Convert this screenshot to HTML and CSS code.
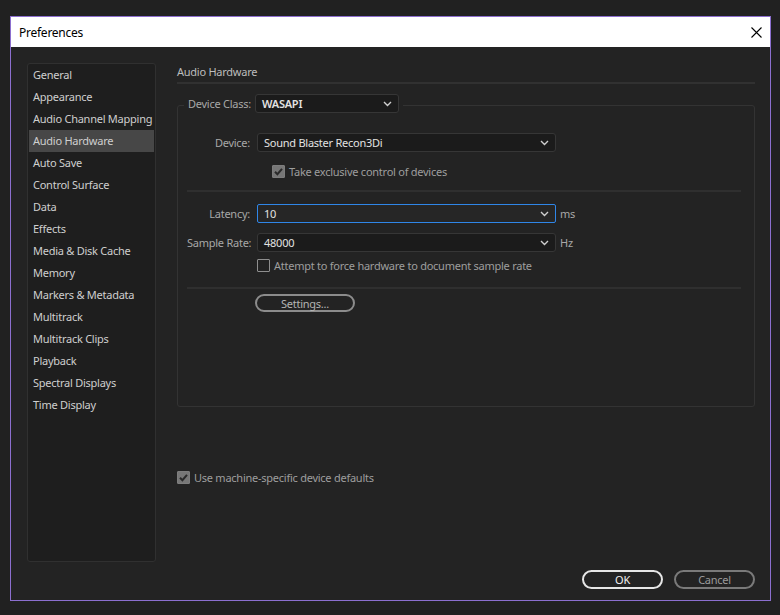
FILE: index.html
```html
<!DOCTYPE html>
<html>
<head>
<meta charset="utf-8">
<title>Preferences</title>
<link rel="stylesheet" href="styles.css">
</head>
<body>
<div class="dialog">
  <div class="titlebar">
    <span class="title">Preferences</span>
    <svg class="close" width="11" height="11" viewBox="0 0 11 11"><path d="M0.5 0.5 L10.5 10.5 M10.5 0.5 L0.5 10.5" stroke="#000" stroke-width="1.1" fill="none"/></svg>
  </div>
  <div class="body">
    <ul class="sidebar">
      <li>General</li>
      <li>Appearance</li>
      <li>Audio Channel Mapping</li>
      <li class="active">Audio Hardware</li>
      <li>Auto Save</li>
      <li>Control Surface</li>
      <li>Data</li>
      <li>Effects</li>
      <li>Media &amp; Disk Cache</li>
      <li>Memory</li>
      <li>Markers &amp; Metadata</li>
      <li>Multitrack</li>
      <li>Multitrack Clips</li>
      <li>Playback</li>
      <li>Spectral Displays</li>
      <li>Time Display</li>
    </ul>
    <div class="main">
      <div class="heading">Audio Hardware</div>
      <fieldset class="group">
        <legend class="legend">
          <span class="label">Device Class:</span>
          <div class="select select-class"><span class="value bold">WASAPI</span><svg class="chev" width="9" height="6" viewBox="0 0 9 6"><path d="M1 1 L4.5 4.5 L8 1" stroke="#cfcfcf" stroke-width="1.4" fill="none"/></svg></div>
        </legend>
        <div class="row row-device">
          <span class="label rlabel">Device:</span>
          <div class="select"><span class="value">Sound Blaster Recon3Di</span><svg class="chev" width="9" height="6" viewBox="0 0 9 6"><path d="M1 1 L4.5 4.5 L8 1" stroke="#cfcfcf" stroke-width="1.4" fill="none"/></svg></div>
        </div>
        <div class="check-row check-exclusive">
          <span class="box checked"><svg width="11" height="11" viewBox="0 0 11 11"><path d="M2 5.8 L4.4 8.2 L9 2.8" stroke="#2a2a2a" stroke-width="2" fill="none"/></svg></span>
          <span class="check-text">Take exclusive control of devices</span>
        </div>
        <div class="sep sep1"></div>
        <div class="row row-latency">
          <span class="label rlabel">Latency:</span>
          <div class="select focused"><span class="value">10</span><svg class="chev" width="9" height="6" viewBox="0 0 9 6"><path d="M1 1 L4.5 4.5 L8 1" stroke="#cfcfcf" stroke-width="1.4" fill="none"/></svg></div>
          <span class="unit">ms</span>
        </div>
        <div class="row row-rate">
          <span class="label rlabel">Sample Rate:</span>
          <div class="select"><span class="value">48000</span><svg class="chev" width="9" height="6" viewBox="0 0 9 6"><path d="M1 1 L4.5 4.5 L8 1" stroke="#cfcfcf" stroke-width="1.4" fill="none"/></svg></div>
          <span class="unit">Hz</span>
        </div>
        <div class="check-row check-force">
          <span class="box"></span>
          <span class="check-text">Attempt to force hardware to document sample rate</span>
        </div>
        <div class="sep sep2"></div>
        <div class="settings-row">
          <button class="pill settings">Settings...</button>
        </div>
      </fieldset>
      <div class="check-row check-defaults">
        <span class="box checked"><svg width="11" height="11" viewBox="0 0 11 11"><path d="M2 5.8 L4.4 8.2 L9 2.8" stroke="#2a2a2a" stroke-width="2" fill="none"/></svg></span>
        <span class="check-text">Use machine-specific device defaults</span>
      </div>
      <div class="buttons">
        <button class="pill ok">OK</button>
        <button class="pill cancel">Cancel</button>
      </div>
    </div>
  </div>
</div>
</body>
</html>
```

FILE: styles.css
```css
* { box-sizing: border-box; }
html, body { margin: 0; padding: 0; }
body {
  background: #212121;
  width: 780px;
  height: 615px;
  overflow: hidden;
  font-family: "Noto Sans", "Open Sans", "Liberation Sans", sans-serif;
  font-size: 11px;
  letter-spacing: -0.25px;
  padding: 16px 0 0 10px;
}
.dialog {
  width: 761px;
  height: 585px;
  border: 1px solid #8c6fcf;
  background: #232323;
  display: flex;
  flex-direction: column;
}
.titlebar {
  height: 30px;
  background: #ffffff;
  display: flex;
  align-items: center;
  justify-content: space-between;
  padding: 0 8px 0 8px;
  flex: none;
}
.title {
  color: #000;
  font-size: 12px;
}
.close { display: block; }
.body {
  flex: 1;
  display: flex;
  align-items: flex-start;
  gap: 21px;
  padding: 16px 15px 11px 16px;
}
.sidebar {
  list-style: none;
  margin: 0;
  padding: 0 1px;
  width: 129px;
  height: 499px;
  flex: none;
  background: #1e1e1e;
  border: 1px solid #303030;
  border-radius: 3px;
}
.sidebar li {
  height: 22px;
  line-height: 22px;
  padding-left: 4px;
  color: #cfcfcf;
  white-space: nowrap;
}
.sidebar li.active {
  background: #474747;
}
.main {
  flex: 1;
  align-self: stretch;
  display: flex;
  flex-direction: column;
}
.heading {
  height: 21px;
  line-height: 18px;
  color: #bdbdbd;
  border-bottom: 2px solid #313131;
}
.group {
  margin: 10px 0 0 0;
  border: 1px solid #333333;
  border-radius: 3px;
  padding: 0 13px 94px 9px;
  min-width: 0;
}
.legend {
  display: flex;
  align-items: flex-start;
  gap: 4px;
  margin-left: -3px;
  padding: 0 4px;
  height: 23px;
}
.legend .label { line-height: 19px; }
.label { color: #a8a8a8; white-space: nowrap; }
.rlabel {
  width: 63px;
  text-align: right;
  flex: none;
}
.select {
  position: relative;
  height: 19px;
  background: #1b1b1b;
  border: 1px solid #363636;
  border-radius: 3px;
  display: flex;
  align-items: center;
  justify-content: space-between;
  padding: 0 6px 0 6px;
  width: 299px;
  flex: none;
}
.select-class { width: 144px; height: 19px; }
.select.focused {
  background: #262626;
  border-color: #2f86e8;
  border-radius: 2px;
}
.value { color: #e2e2e2; white-space: nowrap; }
.bold { font-weight: 600; }
.chev { display: block; }
.row {
  display: flex;
  align-items: center;
  gap: 7px;
  height: 19px;
}
.unit { color: #a8a8a8; margin-left: -3px; }
.row-device { margin-top: 16px; }
.row-latency { margin-top: 12px; }
.row-rate { margin-top: 10px; }
.check-row {
  display: flex;
  align-items: center;
  gap: 4px;
  height: 13px;
}
.check-exclusive { margin-top: 13px; padding-left: 85px; }
.check-force { margin-top: 7px; padding-left: 70px; }
.check-defaults { margin-top: 64px; }
.box {
  width: 13px;
  height: 13px;
  flex: none;
  border: 1px solid #8f8f8f;
  border-radius: 1px;
  background: #232323;
  display: flex;
  align-items: center;
  justify-content: center;
}
.box.checked {
  background: #777777;
  border-color: #7d7d7d;
}
.box svg { display: block; }
.check-text { color: #9e9e9e; white-space: nowrap; }
.sep {
  height: 2px;
  background: #2f2f2f;
}
.sep1 { margin-top: 12px; }
.sep2 { margin-top: 15px; }
.settings-row {
  margin-top: 5px;
  padding-left: 68px;
}
.pill {
  font-family: inherit;
  font-size: 11px;
  letter-spacing: -0.25px;
  height: 19px;
  padding: 0;
  background: transparent;
  border-radius: 10px;
  display: flex;
  align-items: center;
  justify-content: center;
}
.settings {
  width: 100px;
  height: 18px;
  border: 2px solid #8c8c8c;
  color: #b4b4b4;
}
.buttons {
  margin-top: auto;
  display: flex;
  justify-content: flex-end;
  gap: 11px;
}
.ok {
  width: 81px;
  border: 2px solid #e6e6e6;
  color: #f0f0f0;
}
.cancel {
  width: 81px;
  border: 2px solid #7a7a7a;
  color: #9a9a9a;
}
```
